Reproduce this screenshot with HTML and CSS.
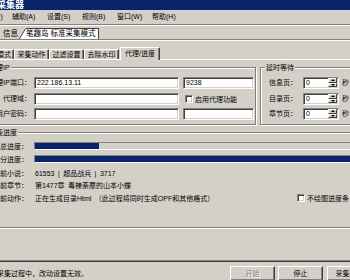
FILE: index.html
```html
<!DOCTYPE html>
<html lang="zh-CN">
<head>
<meta charset="utf-8">
<title>采集器</title>
<link rel="stylesheet" href="styles.css">
</head>
<body>
<div class="win">
  <div class="titlebar">采集器</div>
  <div class="menubar">
    <span class="mi mi-first">文件(F)</span>
    <span class="mi">辅助(A)</span>
    <span class="mi">设置(S)</span>
    <span class="mi">规则(B)</span>
    <span class="mi">窗口(W)</span>
    <span class="mi">帮助(H)</span>
  </div>
  <div class="mdi">
    <span class="mdi-tab inactive">信息</span>
    <svg class="mdi-slant" width="7" height="11" viewBox="0 0 7 11"><polygon points="0,11 6.5,0 7,0 7,11" fill="#fff"/><line x1="0.3" y1="11" x2="6.6" y2="0.5" stroke="#404040" stroke-width="1"/></svg>
    <span class="mdi-tab active">笔趣岛 标准采集模式</span>
  </div>
  <div class="client">
    <div class="tabs">
      <span class="tab t1">基本模式</span>
      <span class="tab">采集动作</span>
      <span class="tab">过滤设置</span>
      <span class="tab">去除水印</span>
      <span class="tab active">代理/进度</span>
    </div>
    <div class="panel">
      <div class="toprow">
        <div class="group g-proxy">
          <div class="gtitle g1t">代理IP</div>
          <div class="proxy-grid">
            <div class="lbl">代理IP端口：</div>
            <div class="field">222.186.13.11</div>
            <div class="field port">9238</div>
            <div class="lbl">代理域：</div>
            <div class="field"></div>
            <div class="chk"><span class="box"></span>启用代理功能</div>
            <div class="lbl">用户密码：</div>
            <div class="field"></div>
            <div class="field port"></div>
          </div>
        </div>
        <div class="group g-delay">
          <div class="gtitle g2t">延时等待</div>
          <div class="delay-grid">
            <div class="dl">信息页：</div>
            <div class="spin"><span class="sv">0</span><span class="sb"><i class="up"></i><i class="dn"></i></span></div>
            <div class="dl">秒</div>
            <div class="dl">目录页：</div>
            <div class="spin"><span class="sv">0</span><span class="sb"><i class="up"></i><i class="dn"></i></span></div>
            <div class="dl">秒</div>
            <div class="dl">章节页：</div>
            <div class="spin"><span class="sv">0</span><span class="sb"><i class="up"></i><i class="dn"></i></span></div>
            <div class="dl">秒</div>
          </div>
        </div>
      </div>
      <div class="group g-prog">
        <div class="gtitle g3t">采集进度</div>
        <div class="prow r1"><div class="pl">总进度：</div><div class="bar"><div class="fill" style="width:18%"></div></div></div>
        <div class="prow r2"><div class="pl">分进度：</div><div class="bar"><div class="fill" style="width:100%"></div></div></div>
        <div class="prow r3"><div class="pl">当前小说：</div><div class="pv">61553 | 超品战兵 | 3717</div></div>
        <div class="prow r4"><div class="pl">当前章节：</div><div class="pv">第1477章 毒辣荼蘼的山本小蝶</div></div>
        <div class="prow r5"><div class="pl">当前动作：</div><div class="pv">正在生成目录Html （此过程将同时生成OPF和其他格式）</div><div class="chk"><span class="box"></span>不绘图进度条</div></div>
      </div>
    </div>
  </div>
  <div class="status">
    <div class="stext">采集过程中，改动设置无效。</div>
    <button class="btn" disabled>开始</button>
    <button class="btn b2">停止</button>
    <button class="btn b3">采集配置</button>
  </div>
</div>
</body>
</html>
```
FILE: styles.css
```css
* { box-sizing: border-box; margin: 0; padding: 0; }
html, body { width: 350px; height: 280px; overflow: hidden; }
body {
  background: #d4d0c8;
  font-family: "Liberation Sans", "Noto Sans CJK SC", sans-serif;
  font-size: 7px;
  line-height: 9px;
  color: #000;
}
.win { width: 420px; margin-left: -20px; }

.titlebar {
  height: 10px;
  background: #0a246a;
  color: #fff;
  font-weight: bold;
  font-size: 9px;
  line-height: 10px;
  padding-left: 17px;
  white-space: nowrap;
}

.menubar {
  height: 15px;
  border-bottom: 1px solid #808080;
  display: flex;
  align-items: center;
  white-space: nowrap;
}
.mi { flex: 0 0 35px; line-height: 14px; }
.mi-first { flex-basis: 32px; }

.mdi {
  height: 15px;
  border-top: 1px solid #fff;
  border-bottom: 1px solid #808080;
  display: flex;
  align-items: flex-end;
  padding-left: 2px;
  white-space: nowrap;
  font-size: 7.5px;
}
.mdi-tab { height: 11px; line-height: 11px; }
.mdi-tab.inactive { flex: 0 0 37px; text-align: right; padding-right: 1px; }
.mdi-slant { display: block; flex: 0 0 7px; }
.mdi-tab.active {
  background: #fff;
  border-top: 1px solid #404040;
  border-right: 1px solid #404040;
  padding-right: 2px;
  line-height: 10px;
}

.client { border-top: 1px solid #fff; padding-top: 6px; }

.tabs {
  height: 13px;
  display: flex;
  align-items: flex-end;
  border-bottom: 1px solid #fff;
  padding-left: 2px;
  white-space: nowrap;
}
.tab {
  flex: 0 0 35px;
  height: 10px;
  line-height: 9px;
  text-align: center;
  border-top: 1px solid #fff;
  border-left: 1px solid #fff;
  border-right: 1px solid #404040;
  box-shadow: inset -1px 0 #808080;
  border-top-left-radius: 1px;
  border-top-right-radius: 1px;
}
.tab.t1 { flex-basis: 32px; text-align: right; padding-right: 3px; overflow: hidden; }
.tab.active {
  flex-basis: 40px;
  margin-left: 1px;
  height: 13px;
  line-height: 11px;
  margin-bottom: -1px;
  background: #d4d0c8;
}

.panel {
  height: 195px;
  padding: 0 2px;
  border-bottom: 1px solid #404040;
  box-shadow: inset 0 -1px #808080;
}

.group {
  border: 1px solid #808080;
  box-shadow: inset 1px 1px #fff, 1px 1px #fff;
}
.gtitle {
  margin-top: -5px;
  height: 9px;
  line-height: 9px;
  background: #d4d0c8;
  width: max-content;
  padding: 0 1px;
  white-space: nowrap;
}
.g1t { margin-left: 5px; }
.g2t { margin-left: 4px; }
.g3t { margin-left: 5px; }

.toprow { display: flex; margin-top: 7px; }
.g-proxy { flex: 0 0 274px; padding-bottom: 4px; }
.g-delay { flex: 0 0 140px; margin-left: 4px; }

.proxy-grid {
  display: grid;
  grid-template-columns: 48px 152px 71px;
  grid-template-rows: 16px 15px 12px;
  align-items: start;
  margin-top: 5px;
}
.proxy-grid .field:not(.port) { margin-left: 3px; }
.lbl {
  height: 12px;
  line-height: 12px;
  display: flex;
  justify-content: flex-end;
  white-space: nowrap;
}
.field {
  width: 145px;
  height: 12px;
  background: #fff;
  border: 1px solid;
  border-color: #808080 #fff #fff #808080;
  box-shadow: inset 1px 1px #404040, inset -1px -1px #d4d0c8;
  padding-left: 2px;
  line-height: 10px;
  white-space: nowrap;
}
.field.port { width: 71px; }

.chk {
  display: flex;
  align-items: center;
  height: 12px;
  padding-left: 2px;
  white-space: nowrap;
}
.box {
  flex: 0 0 8px;
  height: 8px;
  background: #fff;
  border: 1px solid;
  border-color: #808080 #fff #fff #808080;
  box-shadow: inset 1px 1px #404040, inset -1px -1px #d4d0c8;
  margin-right: 2px;
}

.delay-grid {
  display: grid;
  grid-template-columns: 34px 39px auto;
  grid-template-rows: 16px 15px 12px;
  align-items: start;
  margin: 5px 0 0 8px;
}
.dl { line-height: 12px; white-space: nowrap; }
.spin {
  width: 36px;
  height: 12px;
  display: flex;
  background: #fff;
  border: 1px solid;
  border-color: #808080 #fff #fff #808080;
  box-shadow: inset 1px 1px #404040, inset -1px -1px #d4d0c8;
}
.sv { flex: 1; padding-left: 2px; line-height: 10px; }
.sb { flex: 0 0 10px; display: flex; flex-direction: column; padding: 0 1px 1px 0; }
.sb i {
  flex: 1;
  display: flex;
  align-items: center;
  justify-content: center;
  background: #d4d0c8;
  border: 1px solid;
  border-color: #fff #404040 #404040 #fff;
}
.up::after {
  content: "";
  border-left: 2px solid transparent;
  border-right: 2px solid transparent;
  border-bottom: 2px solid #000;
}
.dn::after {
  content: "";
  border-left: 2px solid transparent;
  border-right: 2px solid transparent;
  border-top: 2px solid #000;
}

.g-prog { margin-top: 7px; padding-bottom: 24px; }
.prow { display: flex; align-items: center; }
.r1, .r2 { height: 8px; margin-top: 5px; }
.r3 { height: 10px; margin-top: 5px; }
.r4 { height: 10px; margin-top: 2px; }
.r5 { height: 10px; margin-top: 3px; }
.pl {
  flex: 0 0 45px;
  display: flex;
  justify-content: flex-end;
  white-space: nowrap;
}
.bar {
  flex: 0 0 360px;
  height: 8px;
  margin-left: 6px;
  border: 1px solid;
  border-color: #808080 #fff #fff #808080;
}
.fill { height: 100%; background: #0a246a; }
.pv { margin-left: 7px; white-space: nowrap; word-spacing: 1.5px; }
.r5 .pv { flex: 0 0 262px; }
.r5 .chk { padding-left: 0; }

.status {
  height: 25px;
  padding-top: 4px;
  display: flex;
  align-items: flex-start;
}
.stext {
  flex: 0 0 250px;
  padding-left: 17px;
  line-height: 15px;
  white-space: nowrap;
}
.btn {
  flex: 0 0 45px;
  height: 15px;
  font: inherit;
  line-height: 13px;
  color: #000;
  background: #d4d0c8;
  border: 1px solid;
  border-color: #fff #404040 #404040 #fff;
  box-shadow: inset -1px -1px #808080;
  padding: 0;
  white-space: nowrap;
}
.btn:disabled { color: #808080; text-shadow: 1px 1px #fff; }
.b2 { margin-left: 3px; }
.b3 { margin-left: 4px; }
```
